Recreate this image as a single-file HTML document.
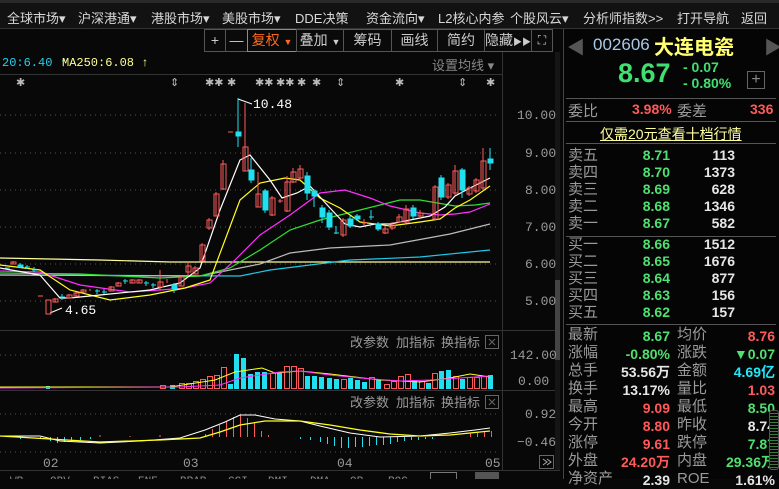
<!DOCTYPE html>
<html><head><meta charset="utf-8"><style>
*{margin:0;padding:0;box-sizing:border-box}
body{width:779px;height:479px;background:#080808;overflow:hidden;position:relative;font-family:"Liberation Sans","Noto Sans CJK SC",sans-serif;color:#ddd}
.a{position:absolute;white-space:nowrap}
.nav{position:absolute;left:0;top:0;width:779px;height:29px;background:#121212;border-top:3px solid #2a2a2a;border-bottom:1px solid #333}
.nav span{position:absolute;top:5px;font-size:13px;color:#d8d8d8}
.tb{position:absolute;top:29px;height:23px;border:1px solid #555;font-size:14px;color:#ccc;text-align:center;line-height:21px;background:#0a0a0a}
.m{font-family:"Liberation Mono",monospace}
.rp{position:absolute;left:563px;top:29px;width:216px;height:450px;background:#050505;border-left:1px solid #444}
.r{position:absolute;font-size:14px;font-weight:bold}
.g{color:#4fe070}.red{color:#ff5a5a}.w{color:#e6e6e6}.lb{color:#9a9a9a;font-weight:normal;font-size:15px}
.hl{position:absolute;left:566px;width:210px;height:1px;background:#555}
</style></head><body>
<div class="nav">
<span style="left:7px">全球市场▾</span><span style="left:78px">沪深港通▾</span><span style="left:151px">港股市场▾</span><span style="left:222px">美股市场▾</span><span style="left:295px">DDE决策</span><span style="left:366px">资金流向▾</span><span style="left:438px">L2核心内参</span><span style="left:510px">个股风云▾</span><span style="left:583px">分析师指数&gt;&gt;</span><span style="left:677px">打开导航</span><span style="left:741px">返回</span>
</div>
<div class="tb" style="left:204px;width:22px">+</div>
<div class="tb" style="left:225px;width:23px">—</div>
<div class="tb" style="left:247px;width:50px;border-color:#ff6a1a;color:#ff6a1a">复权 <span style="font-size:9px">▼</span></div>
<div class="tb" style="left:296px;width:48px">叠加 <span style="font-size:9px">▼</span></div>
<div class="tb" style="left:343px;width:49px">筹码</div>
<div class="tb" style="left:391px;width:47px">画线</div>
<div class="tb" style="left:437px;width:48px">简约</div>
<div class="tb" style="left:484px;width:48px">隐藏<span style="font-size:9px">▶▶</span></div>
<div class="tb" style="left:531px;width:22px;font-size:12px">⛶</div>
<div class="a m" style="left:2px;top:56px;font-size:12px;color:#20d0f0">20:6.40 ↑</div>
<div class="a m" style="left:62px;top:56px;font-size:12px;color:#ffff90">MA250:6.08 ↑</div>
<div class="a" style="left:432px;top:55px;font-size:13px;color:#888">设置均线 ▾</div>
<svg class="a" style="left:0;top:0" width="563" height="479">
<line x1="0" y1="74.5" x2="502" y2="74.5" stroke="#333"/>
<line x1="502.5" y1="52" x2="502.5" y2="470" stroke="#333"/>
<line x1="0" y1="330.5" x2="560" y2="330.5" stroke="#333"/>
<line x1="0" y1="390.5" x2="560" y2="390.5" stroke="#333"/>
<line x1="0" y1="470.5" x2="560" y2="470.5" stroke="#333"/>
<rect x="555" y="52" width="5" height="418" fill="#151515"/><rect x="555" y="280" width="5" height="80" fill="#444"/>
<g stroke="#555" stroke-dasharray="1,4">
<line x1="0" y1="115" x2="497" y2="115"/><line x1="0" y1="153" x2="497" y2="153"/><line x1="0" y1="190" x2="497" y2="190"/><line x1="0" y1="227" x2="497" y2="227"/><line x1="0" y1="264" x2="497" y2="264"/><line x1="0" y1="301" x2="497" y2="301"/>
<line x1="0" y1="355" x2="497" y2="355"/><line x1="0" y1="414" x2="497" y2="414"/><line x1="0" y1="452" x2="497" y2="452"/>
</g>
<g font-family="Liberation Mono,monospace" font-size="13" fill="#999">
<text x="517" y="119">10.00</text><text x="525" y="157">9.00</text><text x="525" y="194">8.00</text><text x="525" y="231">7.00</text><text x="525" y="268">6.00</text><text x="525" y="305">5.00</text>
<text x="510" y="359">142.00</text><text x="518" y="385">0.00</text><text x="525" y="418">0.92</text><text x="517" y="446">−0.46</text>
<text x="43" y="467">02</text><text x="183" y="467">03</text><text x="337" y="467">04</text><text x="485" y="467">05</text>
<text x="253" y="108" fill="#fff">10.48</text><text x="65" y="314" fill="#fff">4.65</text>
</g>
<polyline points="238,99 252,104" stroke="#fff" fill="none"/><polyline points="50,313 62,308" stroke="#fff" fill="none"/>
<g fill="#bbb" font-size="11" font-family="Liberation Mono,monospace">
<text x="16" y="86">✱</text><text x="170" y="86">⇕</text><text x="205" y="86">✱✱</text><text x="227" y="86">✱</text><text x="255" y="86">✱✱</text><text x="276" y="86">✱✱</text><text x="297" y="86">✱</text><text x="312" y="86">✱</text><text x="336" y="86">⇕</text><text x="395" y="86">✱</text><text x="458" y="86">⇕</text><text x="486" y="86">✱</text>
</g>
<g fill="none" stroke-width="1.2">
<polyline stroke="#ffff99" points="0,258 100,260 170,262 490,262"/>
<polyline stroke="#20c8e8" points="0,275 240,276 270,270 350,260 420,257 490,250"/>
<polyline stroke="#bbb" points="0,275 200,276 260,264 290,253 330,248 390,245 450,234 490,224"/>
<polyline stroke="#30e030" points="0,273 80,274 160,278 200,276 230,268 260,250 290,230 320,220 360,210 400,200 420,200 455,206 475,205 490,203"/>
<polyline stroke="#ff30ff" points="0,271 40,272 80,285 130,292 160,290 185,288 210,283 235,260 260,235 290,215 320,193 345,190 370,198 390,206 420,213 440,215 455,214 470,212 490,204"/>
<polyline stroke="#ffff20" points="0,265 40,270 70,290 110,300 150,295 185,288 210,280 225,240 240,200 260,183 285,178 300,180 320,198 340,208 360,222 390,226 420,222 440,219 455,208 470,200 490,186"/>
<polyline stroke="#fff" points="0,268 40,275 60,298 70,298 100,295 150,290 180,283 200,268 220,210 240,160 250,155 270,180 282,198 297,193 310,186 330,208 345,224 360,227 375,224 390,224 410,220 430,216 445,207 455,196 470,188 490,178"/>
</g>
<g stroke-width="1">
<g fill="none" stroke="#ff5a5a">
<path d="M13,261v3M55,298v4M69,294v4M76,292v4M83,289v3M90,289v2M111,286v5M118,282v4M132,279v4M139,279v4M160,270v20M167,279v4M181,276v10M188,262v14M195,266v8M202,243v18M209,218v12M216,192v24M223,160v30M245,103v68M258,172v35M265,189v24M272,196v20M280,199v4M287,176v36M293,168v15M300,165v14M343,218v19M364,219v7M385,226v8M392,222v8M399,214v9M406,205v18M420,210v8M435,185v35M448,183v16M455,165v30M469,186v10M476,178v15M483,148v42"/>
<rect x="11" y="262" width="5" height="2"/><rect x="46" y="300" width="5" height="14"/><rect x="53" y="299" width="5" height="3"/><rect x="67" y="295" width="5" height="3"/><rect x="74" y="293" width="5" height="3"/><rect x="81" y="290" width="5" height="2"/><rect x="109" y="287" width="5" height="4"/><rect x="116" y="283" width="5" height="3"/><rect x="130" y="280" width="5" height="3"/><rect x="137" y="280" width="5" height="3"/><rect x="158" y="282" width="5" height="5"/><rect x="179" y="277" width="5" height="9"/><rect x="186" y="266" width="5" height="6"/><rect x="193" y="268" width="5" height="6"/><rect x="200" y="245" width="5" height="16"/><rect x="207" y="220" width="5" height="8"/><rect x="214" y="194" width="5" height="22"/><rect x="221" y="164" width="5" height="25"/><rect x="243" y="147" width="5" height="24"/><rect x="256" y="194" width="5" height="13"/><rect x="270" y="198" width="5" height="17"/><rect x="285" y="182" width="5" height="29"/><rect x="291" y="172" width="5" height="10"/><rect x="298" y="169" width="5" height="9"/><rect x="341" y="220" width="5" height="15"/><rect x="383" y="229" width="5" height="4"/><rect x="390" y="225" width="5" height="3"/><rect x="397" y="217" width="5" height="5"/><rect x="404" y="209" width="5" height="13"/><rect x="418" y="213" width="5" height="3"/><rect x="433" y="187" width="5" height="32"/><rect x="446" y="185" width="5" height="12"/><rect x="453" y="171" width="5" height="22"/><rect x="467" y="188" width="5" height="6"/><rect x="474" y="180" width="5" height="11"/><rect x="481" y="161" width="5" height="27"/>
<path d="M228,132h5M38,296h5M278,201h5M362,223h5"/>
</g>
<g fill="#20e0f0" stroke="#20e0f0">
<path d="M238,98v49M251,158v25M265,189v24M307,172v28M314,189v18M322,205v18M329,210v20M336,226v8M350,216v12M357,214v7M371,210v10M378,222v9M413,205v14M441,175v25M462,168v30M490,148v22M174,283v10M62,294v6M97,289v5M104,289v5M125,279v5M146,281v5M153,283v5M20,263v5M27,265v4M34,267v5"/>
<rect x="236" y="132" width="5" height="4"/><rect x="249" y="170" width="5" height="10"/><rect x="263" y="191" width="5" height="19"/><rect x="305" y="176" width="5" height="17"/><rect x="312" y="191" width="5" height="5"/><rect x="320" y="208" width="5" height="9"/><rect x="327" y="213" width="5" height="14"/><rect x="348" y="219" width="5" height="7"/><rect x="355" y="216" width="5" height="3"/><rect x="376" y="224" width="5" height="5"/><rect x="411" y="208" width="5" height="8"/><rect x="439" y="178" width="5" height="19"/><rect x="460" y="170" width="5" height="20"/><rect x="488" y="159" width="5" height="4"/><rect x="172" y="285" width="5" height="4"/><rect x="18" y="265" width="5" height="2"/>
<path d="M60,297h5M95,291h5M102,292h5M123,281h5M144,283h5M151,285h5M334,233h5M369,217h5M25,267h5M32,270h5M5,268h5"/>
</g>
</g>
<g>
<g fill="none" stroke="#ff5a5a">
<rect x="270.5" y="373.5" width="5" height="15"/><rect x="284.5" y="366.5" width="5" height="22"/><rect x="291.5" y="366.5" width="5" height="22"/><rect x="298.5" y="368.5" width="5" height="20"/><rect x="341.5" y="379.5" width="5" height="9"/><rect x="369.5" y="377.5" width="5" height="11"/><rect x="384.5" y="384.5" width="5" height="4"/><rect x="391.5" y="381.5" width="5" height="7"/><rect x="398.5" y="376.5" width="5" height="12"/><rect x="405.5" y="374.5" width="5" height="14"/><rect x="419.5" y="381.5" width="5" height="7"/><rect x="432.5" y="373.5" width="5" height="15"/><rect x="453.5" y="376.5" width="5" height="12"/><rect x="467.5" y="377.5" width="5" height="11"/><rect x="474.5" y="377.5" width="5" height="11"/><rect x="481.5" y="376.5" width="5" height="12"/>
<rect x="160.5" y="385.5" width="5" height="3"/><rect x="179.5" y="383.5" width="5" height="5"/><rect x="186.5" y="383.5" width="5" height="5"/><rect x="193.5" y="381.5" width="5" height="7"/><rect x="200.5" y="379.5" width="5" height="9"/><rect x="207.5" y="376.5" width="5" height="12"/><rect x="214.5" y="375.5" width="5" height="13"/><rect x="221.5" y="367.5" width="5" height="21"/></g>
<g fill="#20e0f0"><rect x="46" y="386" width="4" height="3"/><rect x="170" y="385" width="5" height="4"/><rect x="228" y="384" width="5" height="5"/><rect x="234" y="354" width="5" height="35"/><rect x="241" y="358" width="5" height="31"/><rect x="248" y="374" width="5" height="15"/><rect x="255" y="372" width="5" height="17"/><rect x="262" y="372" width="5" height="17"/><rect x="277" y="372" width="5" height="17"/><rect x="305" y="376" width="5" height="13"/><rect x="312" y="376" width="5" height="13"/><rect x="319" y="377" width="5" height="12"/><rect x="327" y="378" width="5" height="11"/><rect x="334" y="379" width="5" height="10"/><rect x="348" y="378" width="5" height="11"/><rect x="355" y="380" width="5" height="9"/><rect x="362" y="382" width="5" height="7"/><rect x="376" y="380" width="5" height="9"/><rect x="412" y="380" width="5" height="9"/><rect x="426" y="383" width="5" height="6"/><rect x="439" y="371" width="5" height="18"/><rect x="446" y="370" width="5" height="19"/><rect x="460" y="379" width="5" height="10"/><rect x="488" y="375" width="5" height="14"/></g>
<polyline fill="none" stroke="#ffff20" points="0,387 170,387 215,380 235,372 262,368 275,373 300,371 330,374 380,380 420,382 450,378 470,374 490,377"/>
<polyline fill="none" stroke="#ff30ff" points="0,388 180,387 220,385 240,378 280,372 300,371 330,375 360,378 400,381 430,380 460,378 490,376"/>
</g>
<g>
<g stroke="#ff5a5a"><path d="M205.5,437v-3M212.5,437v-8M219.5,437v-12M226.5,437v-16M233.5,437v-20M240.5,437v-22M247.5,437v-19M254.5,437v-14M261.5,437v-6M268.5,437v-2M470.5,437v-4M477.5,437v-4M484.5,437v-5M491.5,437v-6M100,437v-2M130,437v-1M160,437v-2"/></g>
<g stroke="#20e0f0"><path d="M20.5,437v2M40.5,437v2M50.5,437v4M57.5,437v6M64.5,437v5M71.5,437v4M80.5,437v3M90.5,437v2M300.5,437v2M310.5,437v3M320.5,437v5M327.5,437v7M334.5,437v9M341.5,437v11M348.5,437v11M355.5,437v10M362.5,437v10M369.5,437v9M376.5,437v8M383.5,437v8M390.5,437v7M397.5,437v5M404.5,437v4M411.5,437v3M418.5,437v3M425.5,437v2M432.5,437v2"/></g>
<polyline fill="none" stroke="#fff" points="0,436 40,436 60,441 100,443 140,441 180,438 205,430 225,422 240,415 255,415 275,419 300,421 320,426 350,433 380,437 420,436 450,433 475,430 490,428"/>
<polyline fill="none" stroke="#ffff20" stroke-width="1.3" points="0,436 50,439 100,442 160,440 200,438 220,432 240,425 265,421 300,421 330,425 360,430 390,434 420,436 450,435 480,432 490,431"/>
</g>
<g font-size="13" fill="#999"><text x="350" y="347">改参数</text><text x="396" y="347">加指标</text><text x="441" y="347">换指标</text><text x="350" y="407">改参数</text><text x="396" y="407">加指标</text><text x="441" y="407">换指标</text></g>
<g fill="none" stroke="#666"><rect x="485.5" y="335.5" width="13" height="13"/><rect x="485.5" y="395.5" width="13" height="13"/><rect x="539.5" y="455.5" width="14" height="13"/><path d="M489,339l6,6M495,339l-6,6M489,399l6,6M495,399l-6,6"/><path d="M543,459l4,3-4,3M547,459l4,3-4,3" stroke="#aaa"/></g>
<g font-size="11" fill="#888" font-family="Liberation Mono,monospace"><text x="10" y="484">WR</text><text x="50" y="484">OBV</text><text x="93" y="484">BIAS</text><text x="138" y="484">ENE</text><text x="180" y="484">BRAR</text><text x="228" y="484">CCI</text><text x="268" y="484">DMI</text><text x="310" y="484">DMA</text><text x="350" y="484">OR</text><text x="388" y="484">ROC</text></g>
<rect x="430.5" y="472.5" width="26" height="10" fill="none" stroke="#777"/><rect x="475" y="472" width="24" height="10" fill="#555"/>
</svg>
<div class="rp"></div>
<div class="a" style="left:567px;top:34px;font-size:18px;color:#555">◀</div>
<div class="a" style="left:764px;top:34px;font-size:18px;color:#555">▶</div>
<div class="a" style="left:593px;top:35px;font-size:17px;color:#a8c8e8">002606</div>
<div class="a" style="left:654px;top:31px;font-size:20px;font-weight:bold;color:#ffff70">大连电瓷</div>
<div class="a" style="left:618px;top:58px;font-size:27px;font-weight:bold;color:#40e070">8.67</div>
<div class="a" style="left:683px;top:59px;font-size:14px;font-weight:bold;color:#40e070">- 0.07</div>
<div class="a" style="left:683px;top:75px;font-size:14px;font-weight:bold;color:#40e070">- 0.80%</div>
<div class="a" style="left:747px;top:71px;width:18px;height:18px;border:1px solid #666;color:#888;font-size:16px;line-height:15px;text-align:center">+</div>
<div class="hl" style="top:98px"></div>
<div class="r lb" style="left:568px;top:100px">委比</div><div class="r red" style="left:632px;top:101px">3.98%</div><div class="r lb" style="left:677px;top:100px">委差</div><div class="r red" style="left:750px;top:101px">336</div>
<div class="hl" style="top:121px"></div>
<div class="a" style="left:600px;top:124px;font-size:14px;color:#ffffa0;text-decoration:underline">仅需20元查看十档行情</div>
<div class="hl" style="top:143px"></div>
<div class="r lb" style="left:568px;top:147px;line-height:17px">卖五<br>卖四<br>卖三<br>卖二<br>卖一</div>
<div class="r g" style="left:620px;top:147px;width:50px;text-align:right;line-height:17px">8.71<br>8.70<br>8.69<br>8.68<br>8.67</div>
<div class="r w" style="left:690px;top:147px;width:45px;text-align:right;line-height:17px">113<br>1373<br>628<br>1346<br>582</div>
<div class="hl" style="top:236px"></div>
<div class="r lb" style="left:568px;top:236px;line-height:17px">买一<br>买二<br>买三<br>买四<br>买五</div>
<div class="r g" style="left:620px;top:236px;width:50px;text-align:right;line-height:17px">8.66<br>8.65<br>8.64<br>8.63<br>8.62</div>
<div class="r w" style="left:690px;top:236px;width:45px;text-align:right;line-height:17px">1512<br>1676<br>877<br>156<br>157</div>
<div class="hl" style="top:324px"></div>
<div class="r lb" style="left:568px;top:326px;line-height:18px">最新<br>涨幅<br>总手<br>换手<br>最高<br>今开<br>涨停<br>外盘<br>净资产</div>
<div class="r" style="left:600px;top:327px;width:70px;text-align:right;line-height:18px"><span class="g">8.67</span><br><span class="g">-0.80%</span><br><span class="w">53.56万</span><br><span class="w">13.17%</span><br><span class="red">9.09</span><br><span class="red">8.80</span><br><span class="red">9.61</span><br><span class="red">24.20万</span><br><span class="w">2.39</span></div>
<div class="r lb" style="left:677px;top:326px;line-height:18px">均价<br>涨跌<br>金额<br>量比<br>最低<br>昨收<br>跌停<br>内盘<br>ROE</div>
<div class="r" style="left:705px;top:327px;width:70px;text-align:right;line-height:18px"><span class="red">8.76</span><br><span class="g">▼0.07</span><br><span style="color:#20e8f8">4.69亿</span><br><span class="red">1.03</span><br><span class="g">8.50</span><br><span class="w">8.74</span><br><span class="g">7.87</span><br><span class="g">29.36万</span><br><span class="w">1.61%</span></div>
<div class="a" style="left:769px;top:410px;width:10px;height:60px;border:1px solid #555;border-radius:3px;background:repeating-linear-gradient(#080808 0 2px,#3a7a3a 2px 3px)"></div>
</body></html>
